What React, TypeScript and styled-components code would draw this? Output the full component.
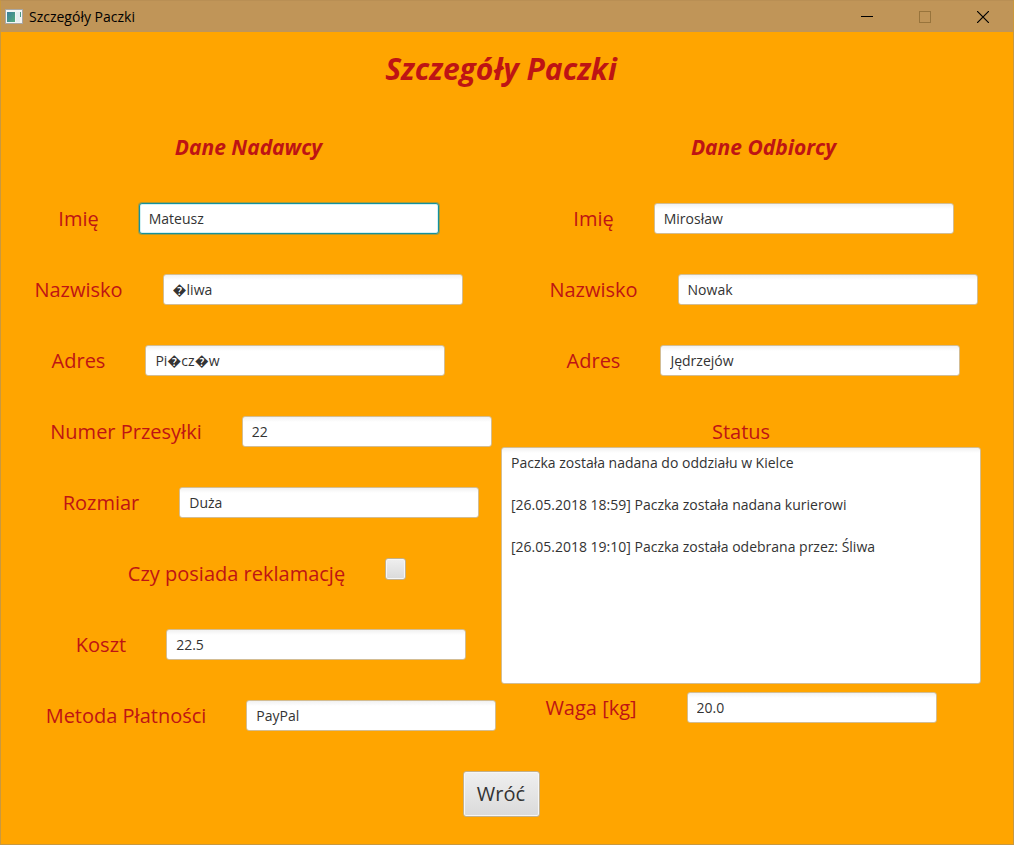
import React from "react";
import styled, { createGlobalStyle, css } from "styled-components";

const GlobalStyle = createGlobalStyle`
  * { box-sizing: border-box; }
  body {
    margin: 0;
    background: #ffa500;
    font-family: "Open Sans", "Noto Sans", sans-serif;
  }
  input, textarea, button { font-family: inherit; }
`;

const ink = "#333333";
const red = "#be1414";

const Window = styled.div`
  min-height: 100vh;
  display: flex;
  flex-direction: column;
  background: #ffa500;
  border: 1px solid #c9983f;
  border-top-color: #b98f54;
`;

const TitleBar = styled.header`
  display: flex;
  align-items: center;
  height: 31px;
  padding: 0 1px 0 4px;
  background: #c09558;
`;

const AppIcon = styled.svg`
  width: 18px;
  height: 16px;
  flex: none;
`;

const WindowTitle = styled.span`
  flex: 1;
  padding-left: 6px;
  font-size: 14px;
  line-height: 20px;
  color: #000000;
`;

const WindowButton = styled.button`
  width: 58px;
  height: 31px;
  padding: 0;
  display: flex;
  align-items: center;
  justify-content: center;
  border: 0;
  background: transparent;
  color: #000000;

  &:disabled { color: #98743c; }
`;

const Content = styled.main`
  flex: 1;
  padding-bottom: 27px;
`;

const PageTitle = styled.h1`
  margin: 0;
  padding: 17px 12px 0 0;
  text-align: center;
  font-size: 30px;
  line-height: 40px;
  font-weight: 700;
  font-style: italic;
  color: ${red};
`;

const People = styled.div`
  display: grid;
  grid-template-columns: 1fr 1fr;
  column-gap: 56px;
  padding: 43px 20px 40px 18px;
`;

const Person = styled.section`
  display: flex;
  flex-direction: column;
  gap: 40px;
`;

const SectionTitle = styled.h2`
  margin: 0;
  text-align: center;
  font-size: 21px;
  line-height: 31px;
  font-weight: 700;
  font-style: italic;
  color: ${red};
`;

const Parcel = styled.div`
  display: grid;
  grid-template-columns: 1fr 480px;
  padding: 0 32px 40px 40px;
`;

const ParcelFields = styled.section`
  display: flex;
  flex-direction: column;
  gap: 40px;
`;

const StatusPanel = styled.section`
  display: flex;
  flex-direction: column;
`;

const Row = styled.div<{ $gap?: number }>`
  display: flex;
  justify-content: center;
  gap: ${(p) => p.$gap ?? 40}px;
  height: 31px;
`;

const CheckRow = styled(Row)`
  padding-right: 8px;
`;

const Label = styled.label`
  font-size: 20px;
  line-height: 31px;
  text-align: center;
  white-space: nowrap;
  color: ${red};
`;

const fieldSurface = css`
  border: 1px solid #d3bd93;
  border-radius: 3px;
  background: linear-gradient(#f1f1f1, #ffffff 5px);
  color: ${ink};
  font-size: 14px;
  outline: none;
`;

const TextInput = styled.input<{ $narrow?: boolean; $focused?: boolean }>`
  ${fieldSurface}
  flex: none;
  width: ${(p) => (p.$narrow ? 250 : 300)}px;
  height: 31px;
  padding: 0 9px;
  line-height: 21px;
  ${(p) =>
    p.$focused &&
    css`
      border-color: #16909c;
      background: #ffffff;
      box-shadow: 0 0 0 1px rgba(110, 150, 100, 0.6), inset 0 0 0 1px #d2f1f4;
    `}
`;

const StatusText = styled.textarea`
  ${fieldSurface}
  display: block;
  width: 100%;
  height: 237px;
  padding: 4px 9px;
  line-height: 21px;
  resize: none;
  margin-bottom: 8px;
`;

const metal = css`
  border: 1px solid #c4b08a;
  border-radius: 3px;
  background: linear-gradient(#efefef, #dadada);
  box-shadow: inset 0 0 0 1px #f6f6f6;
`;

const Checkbox = styled.input`
  ${metal}
  appearance: none;
  flex: none;
  width: 21px;
  height: 22px;
  margin: 0;
`;

const Footer = styled.div`
  display: flex;
  justify-content: center;
  padding-right: 12px;
`;

const BackButton = styled.button`
  ${metal}
  width: 77px;
  height: 46px;
  padding: 0;
  font-size: 20px;
  line-height: 28px;
  color: ${ink};
`;

type FieldProps = {
  id: string;
  label: string;
  value: string;
  narrow?: boolean;
  focused?: boolean;
  gap?: number;
};

function Field({ id, label, value, narrow, focused, gap }: FieldProps) {
  return (
    <Row $gap={gap}>
      <Label htmlFor={id}>{label}</Label>
      <TextInput id={id} type="text" defaultValue={value} $narrow={narrow} $focused={focused} />
    </Row>
  );
}

const statusLog = [
  "Paczka została nadana do oddziału w Kielce",
  "[26.05.2018 18:59] Paczka została nadana kurierowi",
  "[26.05.2018 19:10] Paczka została odebrana przez: Śliwa",
].join("\n\n");

export default function App() {
  return (
    <>
      <GlobalStyle />
      <Window>
        <TitleBar>
          <AppIcon viewBox="0 0 18 16" aria-hidden="true">
            <defs>
              <linearGradient id="pane" x1="0" y1="0" x2="1" y2="1">
                <stop offset="0" stopColor="#3b7f9c" />
                <stop offset="1" stopColor="#55ab7c" />
              </linearGradient>
            </defs>
            <rect x="0" y="0" width="18" height="15" fill="#a9a7a4" />
            <rect x="1" y="1" width="16" height="13" fill="#f4f6f6" />
            <rect x="2" y="3" width="8" height="10" fill="url(#pane)" />
            <rect x="11" y="3" width="4" height="10" fill="#e6eef0" />
            <rect x="15" y="3" width="1" height="5" fill="#4c9a86" />
          </AppIcon>
          <WindowTitle>Szczegóły Paczki</WindowTitle>
          <WindowButton type="button" aria-label="Minimalizuj">
            <svg width="12" height="12" viewBox="0 0 12 12" aria-hidden="true">
              <path d="M0 5.5H12" stroke="currentColor" />
            </svg>
          </WindowButton>
          <WindowButton type="button" aria-label="Maksymalizuj" disabled>
            <svg width="12" height="12" viewBox="0 0 12 12" aria-hidden="true">
              <rect x="0.5" y="0.5" width="11" height="11" fill="none" stroke="currentColor" />
            </svg>
          </WindowButton>
          <WindowButton type="button" aria-label="Zamknij">
            <svg width="12" height="12" viewBox="0 0 12 12" aria-hidden="true">
              <path d="M0 0L12 12M12 0L0 12" stroke="currentColor" strokeWidth="1.2" />
            </svg>
          </WindowButton>
        </TitleBar>
        <Content>
          <PageTitle>Szczegóły Paczki</PageTitle>
          <People>
            <Person>
              <SectionTitle>Dane Nadawcy</SectionTitle>
              <Field id="sender-name" label="Imię" value="Mateusz" focused />
              <Field id="sender-surname" label="Nazwisko" value={"\uFFFDliwa"} />
              <Field id="sender-address" label="Adres" value={"Pi\uFFFDcz\uFFFDw"} />
            </Person>
            <Person>
              <SectionTitle>Dane Odbiorcy</SectionTitle>
              <Field id="recipient-name" label="Imię" value="Mirosław" />
              <Field id="recipient-surname" label="Nazwisko" value="Nowak" />
              <Field id="recipient-address" label="Adres" value="Jędrzejów" />
            </Person>
          </People>
          <Parcel>
            <ParcelFields>
              <Field id="number" label="Numer Przesyłki" value="22" narrow />
              <Field id="size" label="Rozmiar" value="Duża" />
              <CheckRow>
                <Label htmlFor="complaint">Czy posiada reklamację</Label>
                <Checkbox id="complaint" type="checkbox" />
              </CheckRow>
              <Field id="cost" label="Koszt" value="22.5" />
              <Field id="payment" label="Metoda Płatności" value="PayPal" narrow />
            </ParcelFields>
            <StatusPanel>
              <Label htmlFor="status">Status</Label>
              <StatusText id="status" defaultValue={statusLog} spellCheck={false} />
              <Field id="weight" label="Waga [kg]" value="20.0" narrow gap={50} />
            </StatusPanel>
          </Parcel>
          <Footer>
            <BackButton type="button">Wróć</BackButton>
          </Footer>
        </Content>
      </Window>
    </>
  );
}
